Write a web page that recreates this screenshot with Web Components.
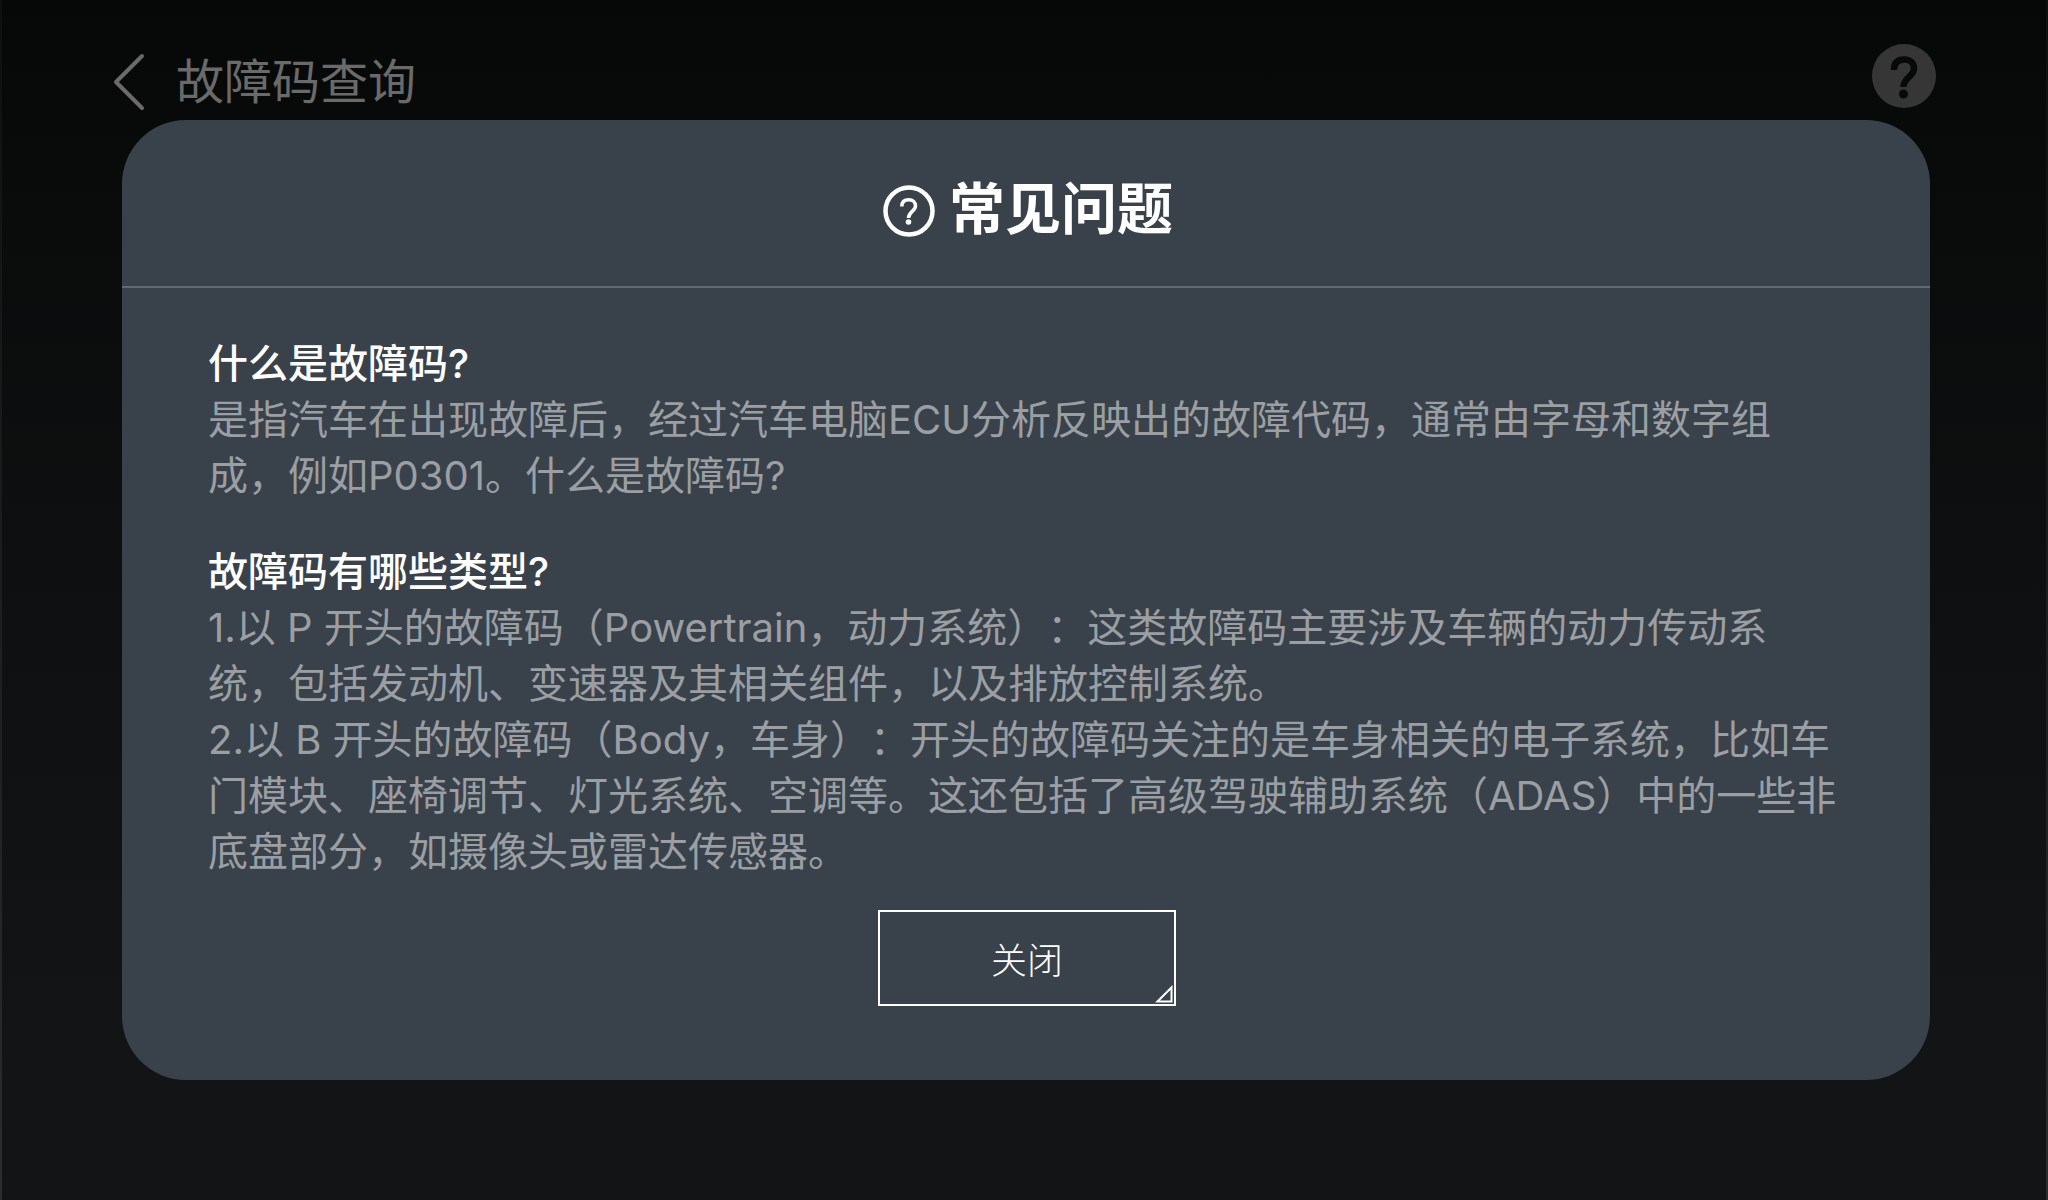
<!DOCTYPE html>
<html lang="zh-CN">
<head>
	<meta charset="utf-8">
	<meta name="viewport" content="width=device-width, initial-scale=1">
	<title>故障码查询</title>
	<style>
		body {
			margin: 0;
			min-height: 100vh;
			box-sizing: border-box;
			border-left: 2px solid #28282c;
			border-right: 2px solid #111110;
			border-image: linear-gradient(#0e1010, #2c2c30) 1;
			border-top: 0;
			border-bottom: 0;
			background: linear-gradient(#060807, #0a0c0c 20%, #131416 88%);
			font-family: Inter, "Noto Sans CJK SC", sans-serif;
			font-weight: 400;
			text-spacing-trim: space-all;
			color: #ffffff;
		}
	</style>
</head>
<body>
	<page-header>故障码查询</page-header>

	<faq-dialog>
		<span slot="title">常见问题</span>
		<faq-item>
			<span slot="question">什么是故障码?</span>
			<p>是指汽车在出现故障后，经过汽车电脑ECU分析反映出的故障代码，通常由字母和数字组成，例如P0301。什么是故障码?</p>
		</faq-item>
		<faq-item>
			<span slot="question">故障码有哪些类型?</span>
			<p>1.以 P 开头的故障码（Powertrain，动力系统）：这类故障码主要涉及车辆的动力传动系统，包括发动机、变速器及其相关组件，以及排放控制系统。</p>
			<p>2.以 B 开头的故障码（Body，车身）：开头的故障码关注的是车身相关的电子系统，比如车门模块、座椅调节、灯光系统、空调等。这还包括了高级驾驶辅助系统（ADAS）中的一些非底盘部分，如摄像头或雷达传感器。</p>
		</faq-item>
		<corner-button slot="action">关闭</corner-button>
	</faq-dialog>

	<script>
		class PageHeader extends HTMLElement {
			constructor() {
				super();
				this.attachShadow({ mode: "open" });
				this.shadowRoot.innerHTML = /* HTML */ `
					<header>
						<button class="back" type="button" aria-label="返回">
							<svg width="36" height="60" viewBox="0 0 36 60">
								<path d="M32 4 L6 30 L32 56" fill="none" stroke="#6a6a6a" stroke-width="4" stroke-linecap="round" stroke-linejoin="round" />
							</svg>
						</button>
						<h1><slot></slot></h1>
						<button class="help" type="button" aria-label="帮助">
							<svg width="64" height="64" viewBox="0 0 64 64">
								<circle cx="32" cy="32" r="32" fill="#363636" />
								<path d="M22 26 C22 18 26.500 15.500 32.500 15.500 C38.500 15.500 42 19.500 42 24.500 C42 32.500 31.500 33.500 31.500 43" fill="none" stroke="#070908" stroke-width="6.500" />
								<circle cx="31.500" cy="50" r="4.500" fill="#070908" />
							</svg>
						</button>
					</header>

					<style>
						:host {
							display: block;
						}

						header {
							display: flex;
							align-items: flex-start;
							padding: 44px 110px 0 108px;
						}

						button {
							display: block;
							padding: 0;
							border: 0;
							background: none;
							cursor: pointer;
						}

						svg {
							display: block;
						}

						.back {
							margin-top: 8px;
						}

						h1 {
							flex: 1;
							margin: 0 0 0 30px;
							font-size: 48px;
							line-height: 76px;
							font-weight: 400;
							color: #6a6a6a;
						}
					</style>
				`;
			}
		}

		class FaqDialog extends HTMLElement {
			constructor() {
				super();
				this.attachShadow({ mode: "open" });
				this.shadowRoot.innerHTML = /* HTML */ `
					<section role="dialog" aria-labelledby="title">
						<header>
							<svg width="52" height="52" viewBox="0 0 52 52">
								<circle cx="26" cy="26" r="23.500" fill="none" stroke="#ffffff" stroke-width="4.500" />
								<path d="M18.800 21.500 C18.800 16.500 21.500 14.800 25.800 14.800 C30 14.800 32.500 17.300 32.500 20.800 C32.500 26.300 25.500 26.500 25.500 33" fill="none" stroke="#ffffff" stroke-width="3.500" />
								<circle cx="25.500" cy="37" r="2.800" fill="#ffffff" />
							</svg>
							<h2 id="title"><slot name="title"></slot></h2>
						</header>
						<div class="content"><slot></slot></div>
						<footer><slot name="action"></slot></footer>
					</section>

					<style>
						:host {
							display: block;
							padding: 0 116px 0 120px;
						}

						section {
							border-radius: 64px;
							background: #39424b;
						}

						header {
							display: flex;
							align-items: center;
							justify-content: center;
							gap: 14px;
							height: 166px;
							padding-left: 4px;
							border-bottom: 2px solid #5f6a73;
						}

						svg {
							margin-top: 16px;
						}

						h2 {
							margin: 12px 0 0;
							font-size: 56px;
							line-height: 84px;
							font-weight: 600;
						}

						.content {
							display: flex;
							flex-direction: column;
							gap: 40px;
							padding: 48px 88px 30px 86px;
						}

						footer {
							display: flex;
							justify-content: center;
							padding: 0 0 74px 2px;
						}
					</style>
				`;
			}
		}

		class FaqItem extends HTMLElement {
			constructor() {
				super();
				this.attachShadow({ mode: "open" });
				this.shadowRoot.innerHTML = /* HTML */ `
					<h3><slot name="question"></slot></h3>
					<slot></slot>

					<style>
						:host {
							display: block;
							font-size: 40px;
							line-height: 56px;
						}

						h3 {
							margin: 0;
							font-size: 40px;
							font-weight: 500;
						}

						::slotted(p) {
							margin: 0;
							color: #9b9fa3;
						}
					</style>
				`;
			}
		}

		class CornerButton extends HTMLElement {
			constructor() {
				super();
				this.attachShadow({ mode: "open" });
				this.shadowRoot.innerHTML = /* HTML */ `
					<button type="button">
						<slot></slot>
						<svg width="18" height="18" viewBox="0 0 18 18">
							<path d="M2.500 16.500 L16.500 2.500 V16.500 Z" fill="none" stroke="#ffffff" stroke-width="2" />
						</svg>
					</button>

					<style>
						:host {
							display: block;
						}

						button {
							position: relative;
							display: block;
							width: 298px;
							height: 96px;
							padding: 0;
							border: 2px solid #ffffff;
							background: none;
							color: inherit;
							font: inherit;
							font-size: 36px;
							font-weight: 300;
							cursor: pointer;
						}

						/* folded corner */
						svg {
							position: absolute;
							right: 1px;
							bottom: 1px;
						}
					</style>
				`;
			}
		}

		customElements.define("page-header", PageHeader);
		customElements.define("faq-dialog", FaqDialog);
		customElements.define("faq-item", FaqItem);
		customElements.define("corner-button", CornerButton);
	</script>
</body>
</html>
